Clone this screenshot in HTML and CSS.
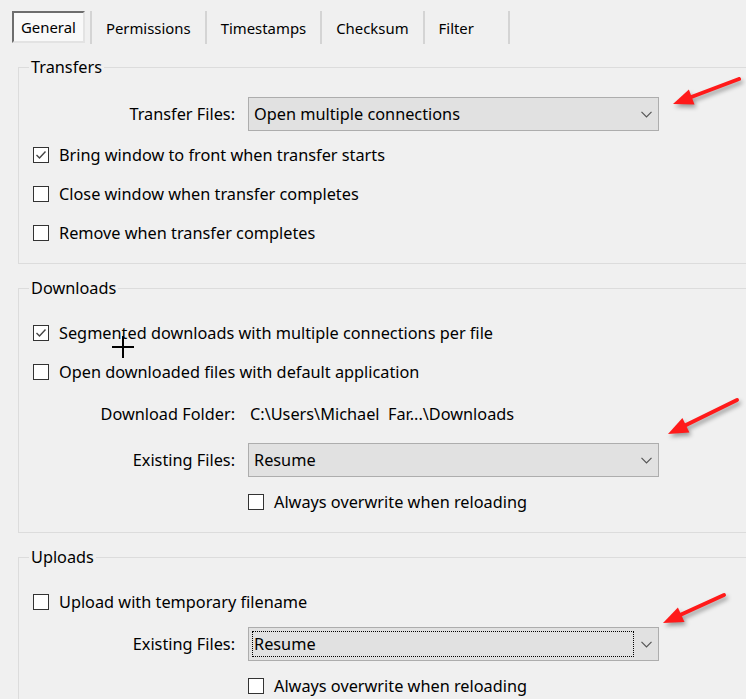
FILE: index.html
```html
<!DOCTYPE html>
<html lang="en">
<head>
    <meta charset="UTF-8">
    <meta name="viewport" content="width=device-width, initial-scale=1.0">
    <title>Transfer Settings</title>
    <link rel="stylesheet" href="styles.css">
</head>
<body>
    <div class="page">
        <div class="tabs">
            <div class="tab tab-active">General</div>
            <div class="tab">Permissions</div>
            <div class="tab">Timestamps</div>
            <div class="tab">Checksum</div>
            <div class="tab tab-last">Filter</div>
        </div>

        <fieldset class="group group-first">
            <legend>Transfers</legend>
            <div class="field-row row-top">
                <span class="field-label">Transfer Files:</span>
                <div class="combo">
                    <span class="combo-value">Open multiple connections</span>
                    <span class="combo-arrow"><svg width="11" height="7" viewBox="0 0 11 7"><polyline points="0.5,0.8 5.5,5.8 10.5,0.8" fill="none" stroke="#555" stroke-width="1.2"/></svg></span>
                </div>
            </div>
            <div class="check-row">
                <span class="box checked"><svg width="14" height="14" viewBox="0 0 14 14"><polyline points="2.5,7 5.5,10 11.5,3.5" fill="none" stroke="#444" stroke-width="1.4"/></svg></span>
                <span>Bring window to front when transfer starts</span>
            </div>
            <div class="check-row">
                <span class="box"></span>
                <span>Close window when transfer completes</span>
            </div>
            <div class="check-row">
                <span class="box"></span>
                <span>Remove when transfer completes</span>
            </div>
        </fieldset>

        <fieldset class="group">
            <legend>Downloads</legend>
            <div class="check-row row-top-check">
                <span class="box checked"><svg width="14" height="14" viewBox="0 0 14 14"><polyline points="2.5,7 5.5,10 11.5,3.5" fill="none" stroke="#444" stroke-width="1.4"/></svg></span>
                <span>Segmented downloads with multiple connections per file</span>
            </div>
            <div class="check-row">
                <span class="box"></span>
                <span>Open downloaded files with default application</span>
            </div>
            <div class="field-row folder-row">
                <span class="field-label">Download Folder:</span>
                <span class="folder-value">C:\Users\Michael&nbsp; Far...\Downloads</span>
            </div>
            <div class="field-row combo-row">
                <span class="field-label">Existing Files:</span>
                <div class="combo">
                    <span class="combo-value">Resume</span>
                    <span class="combo-arrow"><svg width="11" height="7" viewBox="0 0 11 7"><polyline points="0.5,0.8 5.5,5.8 10.5,0.8" fill="none" stroke="#555" stroke-width="1.2"/></svg></span>
                </div>
            </div>
            <div class="check-row sub-check">
                <span class="box"></span>
                <span>Always overwrite when reloading</span>
            </div>
        </fieldset>

        <fieldset class="group">
            <legend>Uploads</legend>
            <div class="check-row row-top-check">
                <span class="box"></span>
                <span>Upload with temporary filename</span>
            </div>
            <div class="field-row combo-row-up">
                <span class="field-label">Existing Files:</span>
                <div class="combo">
                    <span class="combo-value focused">Resume</span>
                    <span class="combo-arrow"><svg width="11" height="7" viewBox="0 0 11 7"><polyline points="0.5,0.8 5.5,5.8 10.5,0.8" fill="none" stroke="#555" stroke-width="1.2"/></svg></span>
                </div>
            </div>
            <div class="check-row sub-check">
                <span class="box"></span>
                <span>Always overwrite when reloading</span>
            </div>
        </fieldset>

        <!-- annotations drawn over the screenshot -->
        <svg class="overlay" width="746" height="699" viewBox="0 0 746 699">
            <g class="arrows">
                <line x1="739" y1="79" x2="690" y2="97.5" stroke="#ff1a1a" stroke-width="4" stroke-linecap="round"/>
                <polygon points="673,104 694.5,104.4 688.9,89.4" fill="#ff1a1a"/>
                <line x1="737" y1="400" x2="684" y2="426" stroke="#ff1a1a" stroke-width="4" stroke-linecap="round"/>
                <polygon points="668,434 689.4,432.4 682.4,418" fill="#ff1a1a"/>
                <line x1="724" y1="595" x2="679" y2="615.5" stroke="#ff1a1a" stroke-width="4" stroke-linecap="round"/>
                <polygon points="663,623 684.5,622 677.9,607.4" fill="#ff1a1a"/>
            </g>
            <g stroke="#000" stroke-width="2">
                <line x1="112" y1="347" x2="134" y2="347"/>
                <line x1="123" y1="336" x2="123" y2="358"/>
            </g>
        </svg>
    </div>
</body>
</html>
```

FILE: styles.css
```css
body {
    margin: 0;
    background: #f0f0f0;
    color: #000;
    font-family: "Noto Sans", "Open Sans", sans-serif;
    font-size: 16.3px;
}

.page {
    position: relative;
    width: 746px;
    height: 699px;
    overflow: hidden;
}

.tabs {
    display: flex;
    height: 33px;
    margin: 11px 0 0 12px;
    font-size: 14.9px;
}

.tab {
    display: flex;
    align-items: center;
    padding: 0 14px;
    border-left: 2px solid #d4d4d4;
}

.tab-last {
    min-width: 55px;
    border-right: 2px solid #d4d4d4;
}

.tab-active {
    height: 32px;
    box-sizing: border-box;
    padding: 0 7px;
    margin-right: 5px;
    background: #f9f9f9;
    border: 2px solid;
    border-color: #6e6e6e #e3e3e3 #e3e3e3 #6e6e6e;
}

.group {
    margin: 14px -40px 0 18px;
    padding: 0 0 11px 14px;
    border: 1px solid #dcdcdc;
    min-width: 0;
}

.group-first {
    margin-top: 13px;
}

.group legend {
    margin-left: -4px;
    padding: 0 2px;
    line-height: 20px;
}

.field-row {
    display: flex;
    align-items: center;
    gap: 13px;
    height: 34px;
}

.field-label {
    width: 202px;
    text-align: right;
}

.row-top {
    margin-top: 20px;
    margin-bottom: 4px;
}

.folder-row {
    height: 39px;
    margin-top: 3px;
}

.folder-value {
    padding-left: 2px;
}

.combo-row {
    margin-top: 10px;
}

.combo-row-up {
    margin-top: 6px;
}

.combo {
    display: flex;
    width: 411px;
    height: 34px;
    box-sizing: border-box;
    padding: 3px 0 3px 3px;
    background: #e1e1e1;
    border: 1px solid #adadad;
}

.combo-value {
    flex: 1;
    display: flex;
    align-items: center;
    padding-left: 1px;
    border: 1px solid transparent;
}

.combo-value.focused {
    border: 1px dotted #000;
}

.combo-arrow {
    width: 24px;
    display: flex;
    align-items: center;
    justify-content: center;
}

.check-row {
    display: flex;
    align-items: center;
    gap: 10px;
    height: 39px;
}

.row-top-check {
    margin-top: 15px;
}

.sub-check {
    margin-top: 5px;
    padding-left: 215px;
}

.box {
    width: 16px;
    height: 16px;
    box-sizing: border-box;
    border: 1px solid #333;
    background: #fff;
    display: flex;
    align-items: center;
    justify-content: center;
}

.overlay {
    position: absolute;
    left: 0;
    top: 0;
    pointer-events: none;
}

.arrows {
    filter: drop-shadow(2px 3px 2px rgba(0, 0, 0, 0.35));
}
```
